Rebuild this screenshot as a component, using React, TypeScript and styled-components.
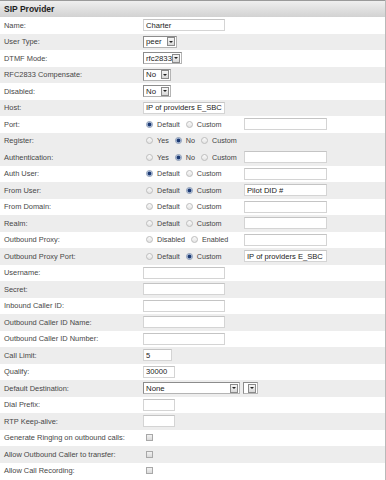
import React from "react";
import styled, { createGlobalStyle } from "styled-components";

const GlobalStyle = createGlobalStyle`
  html, body { margin: 0; padding: 0; background: #fff; }
  body { font-family: "Liberation Sans", Arial, sans-serif; }
`;

const Panel = styled.div`
  width: 385px;
  height: 480px;
  border-right: 1px solid #b9b9b9;
  overflow: hidden;
`;

const Header = styled.div`
  height: 16px;
  border-top: 1px solid #9a9a9a;
  background: linear-gradient(#efefef, #d2d2d2);
  display: flex;
  align-items: center;
  padding-left: 4px;
  font-weight: bold;
  font-size: 8.5px;
  color: #1e1e1e;
`;

const Row = styled.div<{ $gray?: boolean }>`
  height: 16.5px;
  display: grid;
  grid-template-columns: 143px 1fr;
  align-items: center;
  background: ${(p) => (p.$gray ? "#ededed" : "#ffffff")};
`;

const Label = styled.div`
  padding-left: 4px;
  font-size: 7.45px;
  color: #474747;
  white-space: nowrap;
`;

const Controls = styled.div`
  display: flex;
  align-items: center;
`;

const TextInput = styled.input<{ $w: number }>`
  width: ${(p) => p.$w}px;
  height: 12px;
  box-sizing: border-box;
  margin: 0;
  padding: 0 0 0 2px;
  border: 1px solid #d4d4d4;
  border-top-color: #c4c4c4;
  background: #fff;
  font-family: "Liberation Sans", Arial, sans-serif;
  font-size: 7.6px;
  color: #222;
  outline: none;
`;

const SelectBox = styled.div<{ $w: number }>`
  width: ${(p) => p.$w}px;
  height: 12px;
  box-sizing: border-box;
  border: 1px solid #8c8c8c;
  border-right-color: #b4b4b4;
  border-bottom-color: #b4b4b4;
  background: #fff;
  display: flex;
  align-items: center;
  justify-content: space-between;
  padding: 0 1px 0 2px;
  font-size: 7.8px;
  color: #222;
`;

const ArrowBtn = styled.span`
  flex: none;
  width: 8px;
  height: 9px;
  box-sizing: border-box;
  border: 1px solid #8a8a8a;
  background: linear-gradient(#f6f6f6, #d8d8d8);
  display: flex;
  align-items: center;
  justify-content: center;
  &::after {
    content: "";
    border-left: 2px solid transparent;
    border-right: 2px solid transparent;
    border-top: 2px solid #222;
  }
`;

const Gap = styled.span<{ $w: number }>`
  display: inline-block;
  width: ${(p) => p.$w}px;
`;

const RadioGroup = styled.div`
  width: 101px;
  display: flex;
  align-items: center;
  padding-left: 3px;
  box-sizing: border-box;
`;

const RadioOption = styled.span`
  display: flex;
  align-items: center;
  gap: 4px;
  margin-right: 6px;
  font-size: 7.2px;
  color: #444;
  white-space: nowrap;
`;

const RadioDot = styled.span<{ $checked?: boolean }>`
  width: 7px;
  height: 7px;
  box-sizing: border-box;
  border-radius: 50%;
  border: 1px solid ${(p) => (p.$checked ? "#8a9ab4" : "#bdbdbd")};
  background: ${(p) =>
    p.$checked
      ? "radial-gradient(circle, #1d3a72 0 1.4px, #6d88b8 1.9px, #eef2f8 2.6px)"
      : "linear-gradient(#fafafa, #e4e4e4)"};
`;

const CheckBox = styled.span`
  margin-left: 3px;
  width: 7px;
  height: 7px;
  box-sizing: border-box;
  border: 1px solid #a8a8a8;
  background: linear-gradient(#f2f2f2, #dadada);
`;

type Opt = { label: string; checked?: boolean };

const Radios: React.FC<{ options: Opt[] }> = ({ options }) => (
  <RadioGroup>
    {options.map((o) => (
      <RadioOption key={o.label}>
        <RadioDot $checked={o.checked} />
        {o.label}
      </RadioOption>
    ))}
  </RadioGroup>
);

const Select: React.FC<{ w: number; value?: string }> = ({ w, value }) => (
  <SelectBox $w={w}>
    <span>{value ?? ""}</span>
    <ArrowBtn />
  </SelectBox>
);

const Field: React.FC<{ label: string; gray?: boolean; children?: React.ReactNode }> = ({
  label,
  gray,
  children,
}) => (
  <Row $gray={gray}>
    <Label>{label}</Label>
    <Controls>{children}</Controls>
  </Row>
);

const defCustom = (c: boolean): Opt[] => [
  { label: "Default", checked: !c },
  { label: "Custom", checked: c },
];
const dc: Opt[] = [{ label: "Default" }, { label: "Custom" }];
const yesNo: Opt[] = [{ label: "Yes" }, { label: "No", checked: true }, { label: "Custom" }];

export default function App() {
  return (
    <>
      <GlobalStyle />
      <Panel>
        <Header>SIP Provider</Header>
        <Field label="Name:">
          <TextInput $w={82} readOnly value="Charter" />
        </Field>
        <Field label="User Type:" gray>
          <Select w={34} value="peer" />
        </Field>
        <Field label="DTMF Mode:">
          <Select w={39} value="rfc2833" />
        </Field>
        <Field label="RFC2833 Compensate:" gray>
          <Select w={28} value="No" />
        </Field>
        <Field label="Disabled:">
          <Select w={28} value="No" />
        </Field>
        <Field label="Host:" gray>
          <TextInput $w={82} readOnly value="IP of providers E_SBC" />
        </Field>
        <Field label="Port:">
          <Radios options={defCustom(false)} />
          <TextInput $w={83} readOnly value="" />
        </Field>
        <Field label="Register:" gray>
          <Radios options={yesNo} />
        </Field>
        <Field label="Authentication:" gray>
          <Radios options={yesNo} />
          <TextInput $w={83} readOnly value="" />
        </Field>
        <Field label="Auth User:">
          <Radios options={defCustom(false)} />
          <TextInput $w={83} readOnly value="" />
        </Field>
        <Field label="From User:" gray>
          <Radios options={defCustom(true)} />
          <TextInput $w={83} readOnly value="Pilot DID #" />
        </Field>
        <Field label="From Domain:">
          <Radios options={dc} />
          <TextInput $w={83} readOnly value="" />
        </Field>
        <Field label="Realm:" gray>
          <Radios options={dc} />
          <TextInput $w={83} readOnly value="" />
        </Field>
        <Field label="Outbound Proxy:">
          <Radios options={[{ label: "Disabled" }, { label: "Enabled" }]} />
          <TextInput $w={83} readOnly value="" />
        </Field>
        <Field label="Outbound Proxy Port:" gray>
          <Radios options={defCustom(true)} />
          <TextInput $w={83} readOnly value="IP of providers E_SBC" />
        </Field>
        <Field label="Username:">
          <TextInput $w={82} readOnly value="" />
        </Field>
        <Field label="Secret:" gray>
          <TextInput $w={82} readOnly value="" />
        </Field>
        <Field label="Inbound Caller ID:">
          <TextInput $w={82} readOnly value="" />
        </Field>
        <Field label="Outbound Caller ID Name:" gray>
          <TextInput $w={82} readOnly value="" />
        </Field>
        <Field label="Outbound Caller ID Number:">
          <TextInput $w={82} readOnly value="" />
        </Field>
        <Field label="Call Limit:" gray>
          <TextInput $w={29} readOnly value="5" />
        </Field>
        <Field label="Qualify:">
          <TextInput $w={32} readOnly value="30000" />
        </Field>
        <Field label="Default Destination:" gray>
          <Select w={97} value="None" />
          <Gap $w={3} />
          <Select w={15} />
        </Field>
        <Field label="Dial Prefix:">
          <TextInput $w={32} readOnly value="" />
        </Field>
        <Field label="RTP Keep-alive:" gray>
          <TextInput $w={32} readOnly value="" />
        </Field>
        <Field label="Generate Ringing on outbound calls:">
          <CheckBox />
        </Field>
        <Field label="Allow Outbound Caller to transfer:" gray>
          <CheckBox />
        </Field>
        <Field label="Allow Call Recording:">
          <CheckBox />
        </Field>
      </Panel>
    </>
  );
}
